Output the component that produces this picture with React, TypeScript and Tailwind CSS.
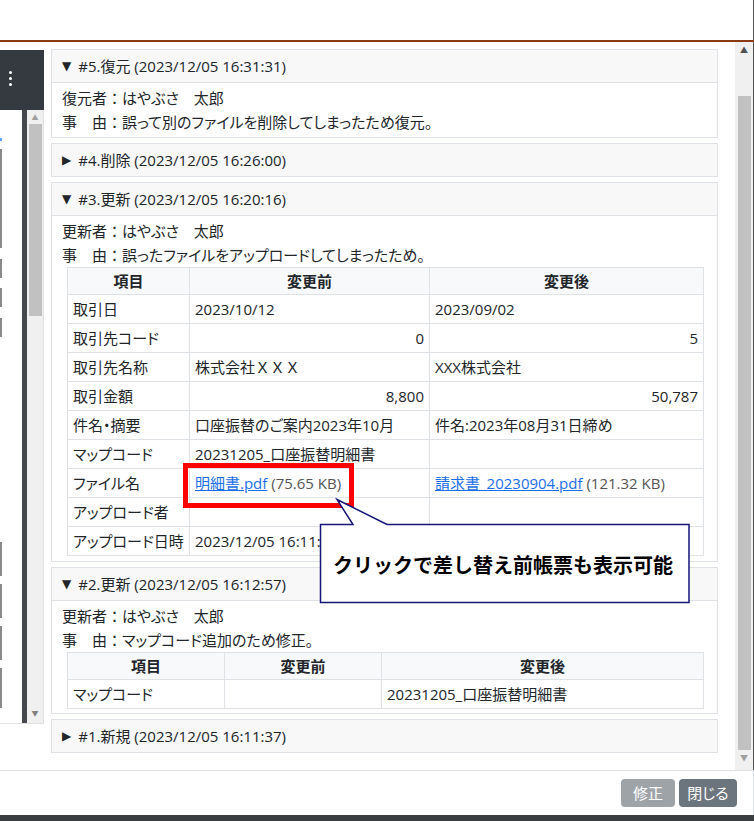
import React from "react";

type Row = { label: string; before: React.ReactNode; after: React.ReactNode; right?: boolean };

const Wide = ({ children }: { children: React.ReactNode }) => (
  <span className="[font-feature-settings:normal]">{children}</span>
);

const file3Rows: Row[] = [
  { label: "取引日", before: "2023/10/12", after: "2023/09/02" },
  { label: "取引先コード", before: "0", after: "5", right: true },
  { label: "取引先名称", before: <>株式会社<Wide>ＸＸＸ</Wide></>, after: "XXX株式会社" },
  { label: "取引金額", before: "8,800", after: "50,787", right: true },
  { label: "件名・摘要", before: "口座振替のご案内2023年10月", after: "件名:2023年08月31日締め" },
  { label: "マップコード", before: "20231205_口座振替明細書", after: "" },
  {
    label: "ファイル名",
    before: (
      <>
        <span className="text-[#1a6ee8] underline">明細書.pdf</span>{" "}
        <span className="text-[#555]">(75.65 KB)</span>
      </>
    ),
    after: (
      <>
        <span className="text-[#1a6ee8] underline">請求書_20230904.pdf</span>{" "}
        <span className="text-[#555]">(121.32 KB)</span>
      </>
    ),
  },
  { label: "アップロード者", before: "", after: "" },
  { label: "アップロード日時", before: "2023/12/05 16:11:37", after: "" },
];

const file2Rows: Row[] = [{ label: "マップコード", before: "", after: "20231205_口座振替明細書" }];

function ChangeTable({ rows, cols, last }: { rows: Row[]; cols: [number, number, number]; last: number }) {
  return (
    <table className="ml-[5px] w-[636px] table-fixed border-collapse" style={{ marginBottom: last }}>
      <colgroup>
        <col style={{ width: cols[0] }} />
        <col style={{ width: cols[1] }} />
        <col style={{ width: cols[2] }} />
      </colgroup>
      <thead>
        <tr className="h-[27px] bg-[#f8f9fa] font-bold">
          <th className="border border-[#dee2e6] text-center">項目</th>
          <th className="border border-[#dee2e6] text-center">変更前</th>
          <th className="border border-[#dee2e6] text-center">変更後</th>
        </tr>
      </thead>
      <tbody>
        {rows.map((r) => (
          <tr key={r.label} className="h-[29px]">
            <td className="border border-[#dee2e6] px-[5px] whitespace-nowrap">{r.label}</td>
            <td className={`border border-[#dee2e6] px-[5px] whitespace-nowrap ${r.right ? "text-right" : ""}`}>
              {r.before}
            </td>
            <td className={`border border-[#dee2e6] px-[5px] whitespace-nowrap ${r.right ? "text-right" : ""}`}>
              {r.after}
            </td>
          </tr>
        ))}
      </tbody>
    </table>
  );
}

function HistoryItem({
  title,
  open,
  children,
}: {
  title: string;
  open?: boolean;
  children?: React.ReactNode;
}) {
  return (
    <div className="border border-[#dee2e6]">
      <div
        className={`flex items-center bg-[#f8f8f9] px-[10px] ${
          open ? "h-[33px] border-b border-[#dee2e6]" : "h-[32px]"
        }`}
      >
        <span className="mr-[7px] font-['DejaVu_Sans'] text-[12px]">{open ? "▼" : "▶"}</span>
        <span>{title}</span>
      </div>
      {open && <div className="bg-white px-[10px] pt-[3px] pb-[3px]">{children}</div>}
    </div>
  );
}

function Line({ label, value }: { label: string; value: string }) {
  return (
    <div className="leading-[24px]">
      <Wide>{label}：</Wide>
      {value}
    </div>
  );
}

function LeftStrip() {
  return (
    <div className="flex w-[44px] shrink-0 flex-col">
      <div className="h-[8px] bg-white" />
      <div className="relative h-[60px] bg-[#343a40]">
        <div className="absolute left-[9px] top-[21px] flex flex-col gap-[3px]">
          <span className="h-[3px] w-[3px] rounded-full bg-white" />
          <span className="h-[3px] w-[3px] rounded-full bg-white" />
          <span className="h-[3px] w-[3px] rounded-full bg-white" />
        </div>
      </div>
      <div className="flex h-[614px] border-r border-b border-[#e2e2e2]">
        <div className="relative w-[22px] bg-white">
          <div className="absolute left-0 top-[28px] h-[3px] w-[2px] bg-[#5aa8ff]" />
          <div className="absolute left-0 top-[39px] h-[99px] w-[2px] bg-[#8a8a8a]" />
          <div className="absolute left-0 top-[149px] h-[19px] w-[2px] bg-[#8a8a8a]" />
          <div className="absolute left-0 top-[178px] h-[19px] w-[2px] bg-[#8a8a8a]" />
          <div className="absolute left-0 top-[208px] h-[19px] w-[2px] bg-[#8a8a8a]" />
          <div className="absolute left-0 top-[432px] h-[34px] w-[2px] bg-[#8a8a8a]" />
          <div className="absolute left-0 top-[474px] h-[34px] w-[2px] bg-[#8a8a8a]" />
          <div className="absolute left-0 top-[516px] h-[34px] w-[2px] bg-[#8a8a8a]" />
          <div className="absolute left-0 top-[558px] h-[40px] w-[2px] bg-[#8a8a8a]" />
        </div>
        <div className="w-[5px] bg-[#45494d]" />
        <div className="flex flex-1 flex-col items-center bg-[#f0f0f0]">
          <span className="mt-[4px] text-[7px] leading-[8px] text-[#a0a0a0]">▲</span>
          <div className="mt-[2px] h-[192px] w-[13px] bg-[#c1c1c1]" />
          <div className="flex-1" />
          <span className="mb-[5px] text-[7px] leading-[8px] text-[#808080]">▼</span>
        </div>
      </div>
    </div>
  );
}

export default function App() {
  return (
    <div className="relative h-[821px] w-[754px] overflow-hidden bg-white font-['Open_Sans','Noto_Sans_CJK_JP',sans-serif] text-[15px] text-[#212529] [font-feature-settings:'palt']">
      <div className="h-[40px] border-r border-[#555] bg-white" />
      <div className="h-[2px] bg-[#8b3a12]" />
      <div className="flex h-[728px] border-r border-[#555]">
        <LeftStrip />
        <div className="flex flex-1 flex-col pl-[7px] pr-[17px]">
          <div className="mt-[7px] flex flex-col gap-[5px]">
            <HistoryItem title="#5.復元 (2023/12/05 16:31:31)" open>
              <Line label="復元者" value="はやぶさ　太郎" />
              <Line label="事　由" value="誤って別のファイルを削除してしまったため復元。" />
            </HistoryItem>
            <HistoryItem title="#4.削除 (2023/12/05 16:26:00)" />
            <HistoryItem title="#3.更新 (2023/12/05 16:20:16)" open>
              <Line label="更新者" value="はやぶさ　太郎" />
              <Line label="事　由" value="誤ったファイルをアップロードしてしまったため。" />
              <ChangeTable rows={file3Rows} cols={[122, 240, 274]} last={2} />
            </HistoryItem>
            <HistoryItem title="#2.更新 (2023/12/05 16:12:57)" open>
              <Line label="更新者" value="はやぶさ　太郎" />
              <Line label="事　由" value="マップコード追加のため修正。" />
              <ChangeTable rows={file2Rows} cols={[157, 157, 322]} last={1} />
            </HistoryItem>
            <HistoryItem title="#1.新規 (2023/12/05 16:11:37)" />
          </div>
        </div>
        <div className="flex w-[18px] shrink-0 flex-col items-center bg-[#f0f0f0]">
          <span className="mt-[3px] text-[8px] leading-[10px] text-[#505050]">▲</span>
          <div className="mt-[41px] h-[654px] w-[13px] bg-[#c1c1c1]" />
          <span className="mt-[3px] text-[8px] leading-[10px] text-[#a0a0a0]">▼</span>
        </div>
      </div>
      <div className="flex h-[45px] items-center justify-end gap-[4px] border-t border-r border-[#dee2e6] pr-[16px]">
        <button className="h-[28px] w-[54px] rounded-[4px] bg-[#9ea3a8] text-white">修正</button>
        <button className="h-[28px] w-[58px] rounded-[4px] bg-[#6c757d] text-white">閉じる</button>
      </div>
      <div className="h-[6px] bg-[#3b3e41]" />

      {/* highlight on the old file link */}
      <div className="absolute left-[183px] top-[463px] h-[45px] w-[171px] border-[5px] border-[#ff0000]" />

      {/* callout */}
      <div className="absolute left-[300px] top-[490px] h-[120px] w-[400px]">
        <svg width="400" height="120" className="absolute inset-0">
          <path
            d="M20.5 34.5 L53 34.5 L37 9.5 L87 34.5 L389 34.5 L389 112.5 L20.5 112.5 Z"
            fill="#ffffff"
            stroke="#14147a"
            strokeWidth="1.5"
          />
        </svg>
        <span className="absolute left-[33px] top-[62px] text-[20px] leading-[28px] font-bold text-black [font-feature-settings:normal]">
          クリックで差し替え前帳票も表示可能
        </span>
      </div>
    </div>
  );
}
